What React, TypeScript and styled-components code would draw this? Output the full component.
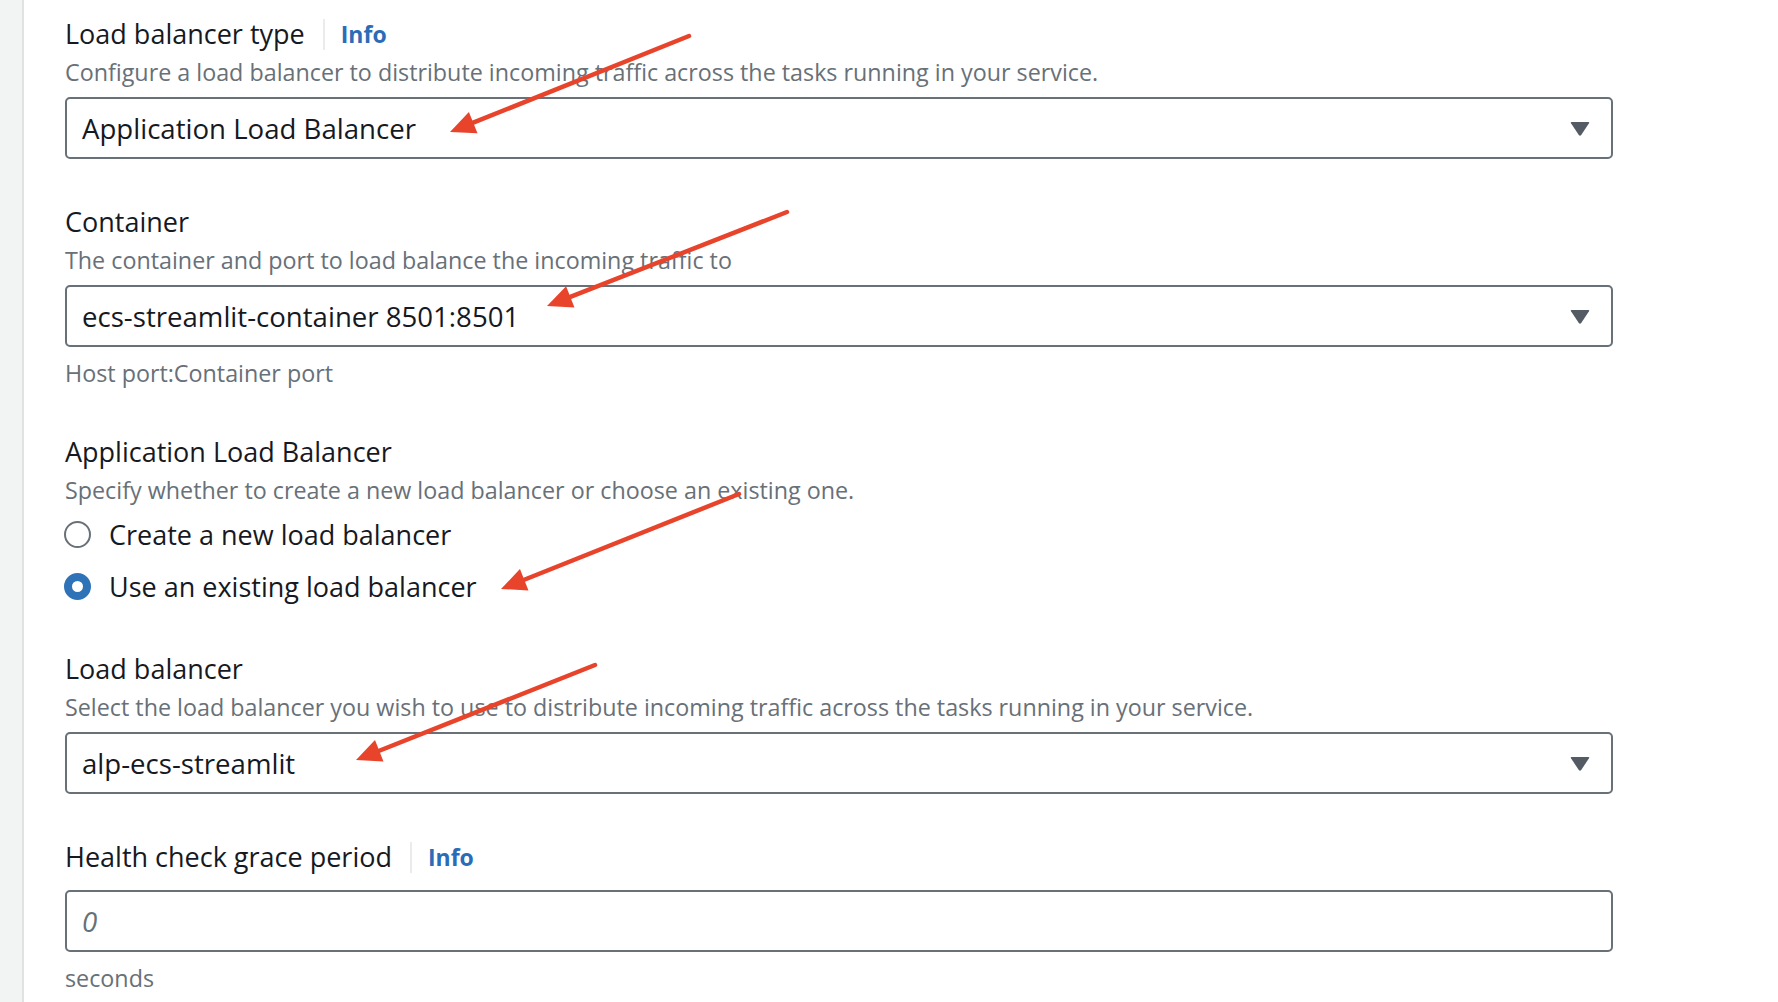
import React from 'react';
import styled, { createGlobalStyle } from 'styled-components';

const GlobalStyle = createGlobalStyle`
  html, body {
    margin: 0;
    padding: 0;
    background: #ffffff;
  }
  body {
    font-family: "Open Sans", "Noto Sans", Arial, sans-serif;
    color: #16191f;
  }
`;

const Page = styled.div`
  position: relative;
  display: flex;
  min-height: 100vh;
  overflow: hidden;
`;

const Sidebar = styled.div`
  width: 22px;
  flex-shrink: 0;
  background: #f2f3f3;
  border-right: 2px solid #e1e3e3;
`;

const Content = styled.main`
  padding: 16px 0 0 41px;
  width: 1548px;
  display: flex;
  flex-direction: column;
  gap: 45px;
`;

const Field = styled.section`
  display: flex;
  flex-direction: column;
`;

const LabelRow = styled.div`
  display: flex;
  align-items: center;
  height: 36px;
`;

const Label = styled.span`
  font-size: 27px;
  line-height: 36px;
  color: #16191f;
`;

const InfoLink = styled.a`
  margin-left: 18px;
  padding-left: 16px;
  border-left: 2px solid #e9ebed;
  height: 31px;
  display: flex;
  align-items: center;
  font-size: 23px;
  font-weight: 700;
  color: #2b6cb8;
  text-decoration: none;
`;

const Description = styled.div`
  margin-top: 4px;
  font-size: 23.3px;
  line-height: 32px;
  color: #687078;
`;

const Hint = styled(Description)`
  margin-top: 10px;
`;

const Control = styled.div<{ $gap?: number; $italic?: boolean }>`
  margin-top: ${(p) => p.$gap ?? 9}px;
  box-sizing: border-box;
  height: 62px;
  display: flex;
  align-items: center;
  justify-content: space-between;
  padding: 0 21px 0 15px;
  border: 2px solid #687078;
  border-radius: 5px;
  font-size: 27.6px;
  color: ${(p) => (p.$italic ? '#687078' : '#16191f')};
  font-style: ${(p) => (p.$italic ? 'italic' : 'normal')};
`;

const RadioGroup = styled.div`
  margin-top: 8px;
  display: flex;
  flex-direction: column;
  gap: 12px;
`;

const RadioRow = styled.label`
  display: flex;
  align-items: center;
  height: 40px;
  gap: 18px;
  font-size: 27px;
  color: #16191f;
`;

const RadioDot = styled.span<{ $checked?: boolean }>`
  box-sizing: border-box;
  width: 27px;
  height: 27px;
  border-radius: 50%;
  flex-shrink: 0;
  margin-left: -1px;
  border: ${(p) => (p.$checked ? '8px solid #2e73b8' : '2px solid #687078')};
  background: #ffffff;
`;

const Overlay = styled.svg`
  position: absolute;
  top: 0;
  left: 0;
  pointer-events: none;
`;

const Caret = () => (
  <svg width="20" height="15" viewBox="0 0 20 15">
    <path d="M1.5 1 H18.5 Q19.8 1 19 2.3 L11.2 14 Q10 15.3 8.8 14 L1 2.3 Q0.2 1 1.5 1 Z" fill="#545b64" />
  </svg>
);

type ArrowSpec = { tail: [number, number]; tip: [number, number] };

const arrows: ArrowSpec[] = [
  { tail: [689, 36], tip: [450, 132] },
  { tail: [787, 212], tip: [547, 306] },
  { tail: [739, 494], tip: [501, 589] },
  { tail: [595, 665], tip: [356, 760] },
];

function Arrow({ tail, tip }: ArrowSpec) {
  const dx = tail[0] - tip[0];
  const dy = tail[1] - tip[1];
  const len = Math.hypot(dx, dy);
  const ux = dx / len;
  const uy = dy / len;
  const headLen = 25;
  const half = 11.5;
  const bx = tip[0] + ux * headLen;
  const by = tip[1] + uy * headLen;
  const p1 = [bx - uy * half, by + ux * half];
  const p2 = [bx + uy * half, by - ux * half];
  return (
    <g>
      <line x1={tail[0]} y1={tail[1]} x2={bx - ux * 2} y2={by - uy * 2} stroke="#e8432b" strokeWidth={4.5} strokeLinecap="round" />
      <polygon points={`${tip[0]},${tip[1]} ${p1[0]},${p1[1]} ${p2[0]},${p2[1]}`} fill="#e8432b" />
    </g>
  );
}

export default function App() {
  return (
    <>
      <GlobalStyle />
      <Page>
        <Sidebar />
        <Content>
          <Field>
            <LabelRow>
              <Label>Load balancer type</Label>
              <InfoLink href="#">Info</InfoLink>
            </LabelRow>
            <Description>Configure a load balancer to distribute incoming traffic across the tasks running in your service.</Description>
            <Control>
              <span>Application Load Balancer</span>
              <Caret />
            </Control>
          </Field>

          <Field>
            <LabelRow>
              <Label>Container</Label>
            </LabelRow>
            <Description>The container and port to load balance the incoming traffic to</Description>
            <Control>
              <span>ecs-streamlit-container 8501:8501</span>
              <Caret />
            </Control>
            <Hint>Host port:Container port</Hint>
          </Field>

          <Field>
            <LabelRow>
              <Label>Application Load Balancer</Label>
            </LabelRow>
            <Description>Specify whether to create a new load balancer or choose an existing one.</Description>
            <RadioGroup>
              <RadioRow>
                <RadioDot />
                Create a new load balancer
              </RadioRow>
              <RadioRow>
                <RadioDot $checked />
                Use an existing load balancer
              </RadioRow>
            </RadioGroup>
          </Field>

          <Field>
            <LabelRow>
              <Label>Load balancer</Label>
            </LabelRow>
            <Description>Select the load balancer you wish to use to distribute incoming traffic across the tasks running in your service.</Description>
            <Control>
              <span>alp-ecs-streamlit</span>
              <Caret />
            </Control>
          </Field>

          <Field>
            <LabelRow>
              <Label>Health check grace period</Label>
              <InfoLink href="#">Info</InfoLink>
            </LabelRow>
            <Control $gap={15} $italic>
              <span>0</span>
            </Control>
            <Hint>seconds</Hint>
          </Field>
        </Content>
        <Overlay width="1778" height="1002" viewBox="0 0 1778 1002">
          {arrows.map((a, i) => (
            <Arrow key={i} {...a} />
          ))}
        </Overlay>
      </Page>
    </>
  );
}
